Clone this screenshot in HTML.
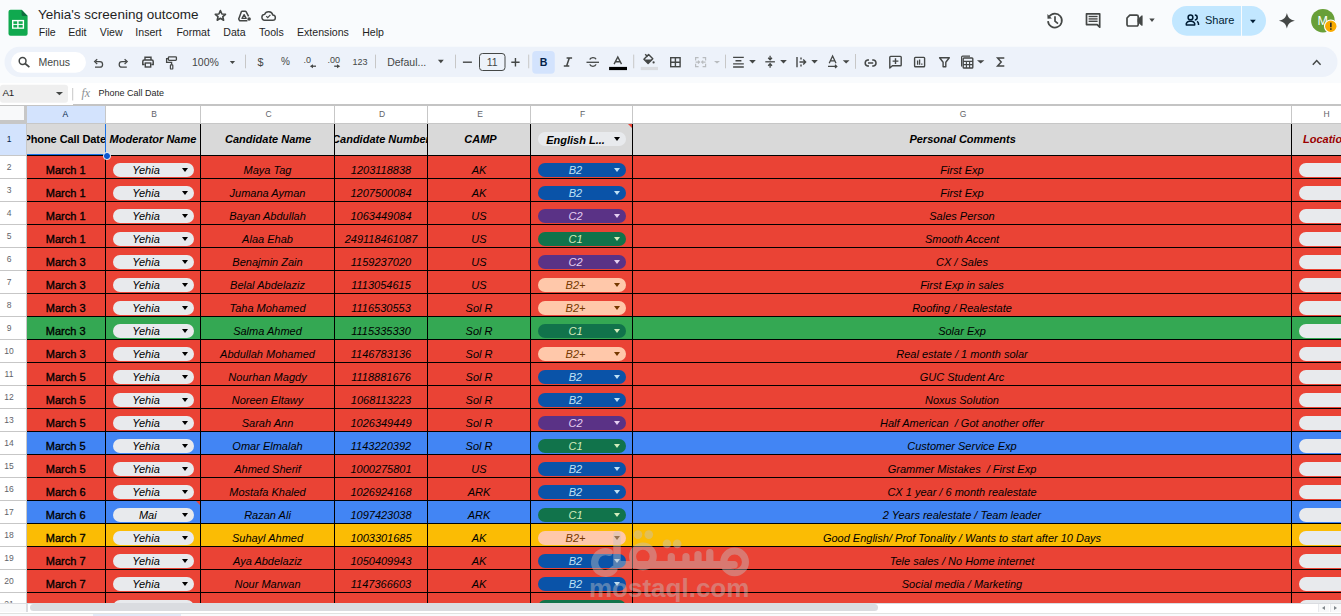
<!DOCTYPE html><html><head><meta charset="utf-8"><style>
*{box-sizing:border-box;margin:0;padding:0}
html,body{width:1341px;height:616px;overflow:hidden;background:#f9fbfd;font-family:"Liberation Sans",sans-serif;position:relative}
.abs{position:absolute}
.t{position:absolute;white-space:nowrap}
.ch{position:absolute;border-radius:7px;background:#e8eaed;height:13.9px}
.ct{position:absolute;top:0;height:13.9px;line-height:14.7px;font:italic 11px "Liberation Sans",sans-serif;text-align:center;white-space:nowrap}
.arr{position:absolute;width:0;height:0;border-left:3.4px solid transparent;border-right:3.4px solid transparent;border-top:4px solid #000}
.cell{position:absolute;overflow:hidden;white-space:nowrap;font:italic 11px "Liberation Sans",sans-serif;color:#000;text-align:center}
.vl{position:absolute;width:1px;background:#000}
.hl{position:absolute;height:1px;background:#000}
.rn{position:absolute;left:0;width:18px;text-align:center;font:8.5px "Liberation Sans",sans-serif;color:#5f6368}
.cn{position:absolute;top:108.8px;height:17px;line-height:17px;text-align:center;font:8.5px "Liberation Sans",sans-serif;color:#5f6368}
.ico{position:absolute}
.menu{position:absolute;top:25px;font:10.3px "Liberation Sans",sans-serif;color:#1f1f1f;white-space:nowrap}
</style></head><body>
<!-- logo -->
<svg class="abs" style="left:0;top:0" width="1341" height="105" viewBox="0 0 1341 105">
  <path d="M10.5 9.7 H21.6 L27.6 15.9 V33.7 a2 2 0 0 1 -2 2 H10.5 a2 2 0 0 1 -2 -2 V11.7 a2 2 0 0 1 2 -2 Z" fill="#10a94f"/>
  <path d="M21.6 9.7 L27.6 15.9 H23.1 a1.5 1.5 0 0 1 -1.5 -1.5 Z" fill="#0d6e3f"/>
  <rect x="12" y="19.9" width="12.1" height="8.9" fill="#fff"/>
  <rect x="13.4" y="21.3" width="3.8" height="2.6" fill="#10a94f"/>
  <rect x="18.6" y="21.3" width="4.1" height="2.6" fill="#10a94f"/>
  <rect x="13.4" y="24.9" width="3.8" height="2.6" fill="#10a94f"/>
  <rect x="18.6" y="24.9" width="4.1" height="2.6" fill="#10a94f"/>
  <!-- star -->
  <path d="M220.4 10.6 L221.9 14 L225.5 14.3 L222.8 16.7 L223.6 20.2 L220.4 18.3 L217.2 20.2 L218 16.7 L215.3 14.3 L218.9 14 Z" fill="none" stroke="#444746" stroke-width="1.6" stroke-linejoin="round"/>
  <!-- drive move icon -->
  <path d="M242.2 11.2 H245.2 a1 1 0 0 1 0.85 0.5 L248.6 16.4 M247.4 20.8 H240.3 a1 1 0 0 1 -0.86 -0.5 L238.9 19.4 a1 1 0 0 1 0 -1 L241.35 11.7 a1 1 0 0 1 0.85 -0.5" fill="none" stroke="#444746" stroke-width="1.5" stroke-linejoin="round"/>
  <path d="M244.1 14.6 L246.2 18.4 H242 Z" fill="none" stroke="#444746" stroke-width="1.3" stroke-linejoin="round"/>
  <circle cx="249.1" cy="19" r="1.8" fill="#444746"/>
  <!-- cloud -->
  <path d="M265 20.2 a2.9 2.9 0 0 1 -0.4 -5.8 a4.3 4.3 0 0 1 8.2 0.6 a2.6 2.6 0 0 1 -0.1 5.2 Z" fill="none" stroke="#444746" stroke-width="1.45" stroke-linejoin="round"/>
  <path d="M266.2 16.2 L267.7 17.7 L270.4 14.8" fill="none" stroke="#444746" stroke-width="1.2"/>

  <!-- right icons: history -->
  <path d="M1049.2 16.6 A6.95 6.95 0 1 1 1047.98 21.1" fill="none" stroke="#444746" stroke-width="1.7"/>
  <path d="M1047.4 14.1 L1047.5 18.7 L1051.9 18.5 Z" fill="#444746"/>
  <path d="M1055 16.2 V21.2 L1058 23.6" fill="none" stroke="#444746" stroke-width="1.7"/>
  <!-- comments -->
  <path d="M1086.5 13.8 H1099.7 V27.2 L1097.2 24.6 H1086.5 Z" fill="none" stroke="#444746" stroke-width="1.7" stroke-linejoin="round"/>
  <rect x="1088.6" y="15.8" width="9" height="1.4" fill="#444746"/>
  <rect x="1088.6" y="18" width="9" height="1.8" fill="#707070"/>
  <rect x="1088.6" y="20.6" width="9" height="1.4" fill="#444746"/>
  <!-- meet -->
  <path d="M1129.8 15.2 H1136.8 a1.4 1.4 0 0 1 1.4 1.4 V24.6 a1.4 1.4 0 0 1 -1.4 1.4 H1128.4 a1.4 1.4 0 0 1 -1.4 -1.4 V18 Z" fill="none" stroke="#444746" stroke-width="1.7" stroke-linejoin="round"/>
  <path d="M1138.2 19.4 L1142 16 V25.2 L1138.2 21.8 Z" fill="#444746" stroke="#444746" stroke-width="1.2" stroke-linejoin="round"/>
  <path d="M1149.3 18.6 H1154.7 L1152 22 Z" fill="#444746"/>
  <!-- share pill -->
  <path d="M1186.9 5.9 H1241 V35.7 H1186.9 a14.9 14.9 0 0 1 0 -29.8 Z" fill="#c2e7ff"/>
  <path d="M1242 5.9 H1251.1 a14.9 14.9 0 0 1 0 29.8 H1242 Z" fill="#c2e7ff"/>
  <circle cx="1190.5" cy="17.4" r="2.4" fill="none" stroke="#001d35" stroke-width="1.5"/>
  <path d="M1186.3 24.9 V23.6 a3.6 3.6 0 0 1 3.6 -2.4 h1.2 a3.6 3.6 0 0 1 3.6 2.4 V24.9 Z" fill="none" stroke="#001d35" stroke-width="1.5" stroke-linejoin="round"/>
  <path d="M1194.8 15.1 a2.4 2.4 0 0 1 0 4.8 M1197 21.4 a3 3 0 0 1 1.5 2.4 V24.9" fill="none" stroke="#001d35" stroke-width="1.5"/>
  <path d="M1250 19.7 H1255.8 L1252.9 23.2 Z" fill="#001d35"/>
  <!-- gemini -->
  <path d="M1286.9 13.1 C1287.9 17.6 1290 19.9 1294.9 20.85 C1290 21.8 1287.9 24.1 1286.9 28.6 C1285.9 24.1 1283.8 21.8 1278.9 20.85 C1283.8 19.9 1285.9 17.6 1286.9 13.1 Z" fill="#444746"/>
  <!-- avatar -->
  <circle cx="1322.9" cy="20.7" r="11.8" fill="#689f38"/>
  <text x="1322.6" y="25.1" font-family="Liberation Sans" font-size="12.5" fill="#fff" text-anchor="middle">M</text>
  <circle cx="1330.8" cy="26.3" r="6.3" fill="#f9ab00" stroke="#fff" stroke-width="1.1"/>
  <rect x="1330.1" y="22.6" width="1.5" height="4.6" fill="#202124"/>
  <rect x="1330.1" y="28.3" width="1.5" height="1.5" fill="#202124"/>

  <!-- toolbar pill -->
  <rect x="4.5" y="46.8" width="1333" height="30.2" rx="15.1" fill="#edf2fa"/>
  <rect x="11" y="52" width="75" height="20.8" rx="10.4" fill="#fff"/>
  <!-- search -->
  <circle cx="22.6" cy="61" r="3.4" fill="none" stroke="#444746" stroke-width="1.5"/>
  <path d="M25.1 63.5 L29.4 67.2" stroke="#444746" stroke-width="1.7"/>
  <!-- undo -->
  <path d="M95.6 61.6 H99.8 a2.8 2.8 0 0 1 0 5.6 H95" fill="none" stroke="#444746" stroke-width="1.25"/>
  <path d="M97.2 59.2 L94.6 61.6 L97.2 64" fill="none" stroke="#444746" stroke-width="1.25"/>
  <!-- redo -->
  <path d="M126.2 61.6 H122 a2.8 2.8 0 0 0 0 5.6 H126.8" fill="none" stroke="#444746" stroke-width="1.25"/>
  <path d="M124.6 59.2 L127.2 61.6 L124.6 64" fill="none" stroke="#444746" stroke-width="1.25"/>
  <!-- print -->
  <path d="M145 60 V57.2 H151 V60" fill="none" stroke="#444746" stroke-width="1.4"/>
  <path d="M144.6 64.6 H142.8 V61.4 a1.4 1.4 0 0 1 1.4 -1.4 H151.8 a1.4 1.4 0 0 1 1.4 1.4 V64.6 H151.4" fill="none" stroke="#444746" stroke-width="1.5"/>
  <rect x="145.3" y="63" width="5.4" height="4" fill="none" stroke="#444746" stroke-width="1.4"/>
  <!-- paint format -->
  <rect x="168.4" y="56.8" width="8" height="3.6" rx="0.8" fill="none" stroke="#444746" stroke-width="1.3"/>
  <path d="M168.4 58.6 H166.6 V62.4 H171.6 V64.8" fill="none" stroke="#444746" stroke-width="1.3"/>
  <rect x="170.4" y="64.8" width="2.4" height="4.2" rx="0.6" fill="none" stroke="#444746" stroke-width="1.2"/>
  <!-- zoom caret -->
  <path d="M229.8 61 H235.1 L232.45 64.1 Z" fill="#444746"/>
  <!-- separators -->
  <rect x="245" y="54.6" width="1" height="13.7" fill="#c7c7c7"/>
  <rect x="375" y="54.6" width="1" height="13.7" fill="#c7c7c7"/>
  <rect x="455" y="54.6" width="1" height="13.7" fill="#c7c7c7"/>
  <rect x="528.2" y="54.6" width="1" height="13.7" fill="#c7c7c7"/>
  <rect x="633.2" y="54.6" width="1" height="13.7" fill="#c7c7c7"/>
  <rect x="725" y="54.6" width="1" height="13.7" fill="#c7c7c7"/>
  <rect x="855" y="54" width="1" height="14.8" fill="#c7c7c7"/>
  <!-- .0 arrows -->
  <path d="M312.5 66.2 H316" stroke="#444746" stroke-width="1.3"/>
  <path d="M309.9 66.2 L313 64.2 V68.2 Z" fill="#444746"/>
  <path d="M334.2 66.2 H337.5" stroke="#444746" stroke-width="1.3"/>
  <path d="M340.2 66.2 L337 64.2 V68.2 Z" fill="#444746"/>
  <!-- font size box -->
  <rect x="479.5" y="53.5" width="25.5" height="17" rx="3" fill="none" stroke="#444746" stroke-width="1"/>
  <path d="M462.9 62.2 H471.9" stroke="#444746" stroke-width="1.4"/>
  <path d="M511.3 62.3 H519.6 M515.45 58.1 V66.5" stroke="#444746" stroke-width="1.4"/>
  <!-- font caret -->
  <path d="M437.9 59.7 H443.8 L440.85 63.3 Z" fill="#444746"/>
  <!-- bold bg -->
  <rect x="532.2" y="51" width="22.6" height="22.7" rx="4" fill="#d3e3fd"/>
  <path d="M566.6 57.9 H572.1 M563.8 65.9 H569.3 M569.3 57.9 L566.6 65.9" fill="none" stroke="#444746" stroke-width="1.5"/>
  <!-- strikethrough -->
  <path d="M586.5 62.3 H599" stroke="#444746" stroke-width="1.3"/>
  <path d="M596 59.3 a3.2 2.4 0 0 0 -6.2 0.2 M589.8 64.4 a3.2 2.6 0 0 0 6.2 0" fill="none" stroke="#444746" stroke-width="1.4"/>
  <!-- text color A -->
  <path d="M614.1 64.1 L617.8 57 L621.5 64.1 M615.5 61.8 H620.1" fill="none" stroke="#444746" stroke-width="1.4"/>
  <rect x="609.1" y="66.9" width="17.9" height="3.2" fill="#000"/>
  <!-- fill bucket -->
  <path d="M645.2 54.2 L647.7 56.7 M643.9 59.3 L648.6 54.6 L652.8 58.8 L648.1 63.5 Z" fill="none" stroke="#444746" stroke-width="1.4" stroke-linejoin="round"/>
  <path d="M644.6 59.4 H652 L648.1 63.2 Z" fill="#444746"/>
  <circle cx="653.6" cy="62.4" r="1.1" fill="#444746"/>
  <rect x="640.8" y="66.9" width="17.2" height="3.2" fill="#dadce0"/>
  <!-- borders -->
  <rect x="670.7" y="57.7" width="9.4" height="9" fill="none" stroke="#444746" stroke-width="1.4"/>
  <path d="M675.4 57.7 V66.7 M670.7 62.2 H680.1" stroke="#444746" stroke-width="1.4"/>
  <!-- merge disabled -->
  <path d="M698.6 57.6 H695.6 V60.4 M695.6 63.8 V66.6 H698.6 M702.6 57.6 H705.6 V60.4 M705.6 63.8 V66.6 H702.6" fill="none" stroke="#b9bcbf" stroke-width="1.2"/>
  <path d="M695.6 62.1 H699.4 M698 60.6 L699.6 62.1 L698 63.6 M705.6 62.1 H701.8 M703.2 60.6 L701.6 62.1 L703.2 63.6" fill="none" stroke="#b9bcbf" stroke-width="1.1"/>
  <path d="M714 61 H720 L717 63.6 Z" fill="#b9bcbf"/>
  <!-- align center -->
  <path d="M733.1 57.4 H743.8 M735.5 60.7 H741.4 M733.1 63.9 H743.8 M733.1 67 H743.8" stroke="#444746" stroke-width="1.4"/>
  <path d="M749.2 59.9 H755.8 L752.5 63.5 Z" fill="#444746"/>
  <!-- vertical align -->
  <path d="M765.3 61.8 H774.9" stroke="#444746" stroke-width="1.3"/>
  <path d="M770.1 55.8 V59.6 M768.2 57.8 L770.1 59.8 L772 57.8 M770.1 67.7 V64 M768.2 65.8 L770.1 63.8 L772 65.8" fill="none" stroke="#444746" stroke-width="1.3"/>
  <path d="M780.2 59.9 H786.8 L783.5 63.5 Z" fill="#444746"/>
  <!-- wrap -->
  <path d="M797 57 V67.2 M799.5 62 H805.5 M803.2 59.6 L805.6 62 L803.2 64.4 M801 57.6 V59.4 M801 64.6 V66.4" fill="none" stroke="#444746" stroke-width="1.4"/>
  <path d="M811.3 59.9 H817.8 L814.55 63.5 Z" fill="#444746"/>
  <!-- rotate -->
  <path d="M829.2 63.3 L832.6 56 L836 63.3 M830.4 60.9 H834.8" fill="none" stroke="#444746" stroke-width="1.3"/>
  <path d="M828 66.4 H836.8 M835 64.8 L836.8 66.4 L835 68" fill="none" stroke="#444746" stroke-width="1.2"/>
  <path d="M842.8 60.2 H849.5 L846.15 63.6 Z" fill="#444746"/>
  <!-- link -->
  <path d="M869 59.9 H867.6 a3.2 3.2 0 0 0 0 6.2 H869 M872.2 59.9 H873.6 a3.2 3.2 0 0 1 0 6.2 H872.2 M868 63 H873.2" fill="none" stroke="#444746" stroke-width="1.5"/>
  <!-- comment add -->
  <path d="M889.8 68.1 V57.2 a0.8 0.8 0 0 1 0.8 -0.8 H900.4 a0.8 0.8 0 0 1 0.8 0.8 V65 a0.8 0.8 0 0 1 -0.8 0.8 H892.4 Z" fill="none" stroke="#444746" stroke-width="1.4" stroke-linejoin="round"/>
  <path d="M895.5 58.2 V64 M892.6 61.1 H898.4" stroke="#444746" stroke-width="1.4"/>
  <!-- chart -->
  <rect x="914.6" y="57.4" width="10" height="9.4" rx="0.8" fill="none" stroke="#444746" stroke-width="1.4"/>
  <path d="M917.6 60.5 V64.8 M919.6 59.5 V64.8 M921.8 63.4 V64.8" stroke="#444746" stroke-width="1.3"/>
  <!-- filter -->
  <path d="M939.6 57.8 H949.3 L945.8 62.3 V66.8 H943.1 V62.3 Z" fill="none" stroke="#444746" stroke-width="1.4" stroke-linejoin="round"/>
  <!-- functions table -->
  <rect x="963.2" y="58" width="9.6" height="10" rx="0.8" fill="none" stroke="#444746" stroke-width="1.4"/>
  <path d="M961.6 66.6 V57.2 a1 1 0 0 1 1 -1 H970" fill="none" stroke="#444746" stroke-width="1.2"/>
  <path d="M963.2 61.4 H972.8 M963.2 64.6 H972.8 M966.4 61.4 V68 M969.6 61.4 V68" stroke="#444746" stroke-width="1.1"/>
  <path d="M977 60.2 H984.4 L980.7 63.6 Z" fill="#444746"/>
  <!-- sigma -->
  <path d="M1004.3 58 H997.6 L1001.2 62 L997.6 66 H1004.3" fill="none" stroke="#444746" stroke-width="1.5" stroke-linejoin="miter"/>
  <!-- collapse caret -->
  <path d="M1312.8 64.8 L1316.7 60.6 L1320.6 64.8" fill="none" stroke="#444746" stroke-width="1.5"/>

  <!-- formula bar -->
  <rect x="0" y="77" width="1341" height="28" fill="#f9fbfd"/>
  <rect x="0" y="83" width="1341" height="22" fill="#fff"/>
  <rect x="0" y="84.7" width="68" height="18" rx="3" fill="#efefef"/>
  <path d="M55.9 92 H63 L59.45 95.3 Z" fill="#444746"/>
  <rect x="72.2" y="88" width="1" height="12.5" fill="#c7c7c7"/>
</svg>
<div class="t" style="left:38px;top:8px;font-size:13.5px;line-height:13.5px;color:#1f1f1f">Yehia's screening outcome</div>
<div class="t" style="left:38.7px;top:26.8px;font-size:10.6px;line-height:10.6px;color:#1f1f1f">File</div>
<div class="t" style="left:68.2px;top:26.8px;font-size:10.6px;line-height:10.6px;color:#1f1f1f">Edit</div>
<div class="t" style="left:99.8px;top:26.8px;font-size:10.6px;line-height:10.6px;color:#1f1f1f">View</div>
<div class="t" style="left:135.3px;top:26.8px;font-size:10.6px;line-height:10.6px;color:#1f1f1f">Insert</div>
<div class="t" style="left:176.4px;top:26.8px;font-size:10.6px;line-height:10.6px;color:#1f1f1f">Format</div>
<div class="t" style="left:223.3px;top:26.8px;font-size:10.6px;line-height:10.6px;color:#1f1f1f">Data</div>
<div class="t" style="left:259px;top:26.8px;font-size:10.6px;line-height:10.6px;color:#1f1f1f">Tools</div>
<div class="t" style="left:297px;top:26.8px;font-size:10.6px;line-height:10.6px;color:#1f1f1f">Extensions</div>
<div class="t" style="left:362.2px;top:26.8px;font-size:10.6px;line-height:10.6px;color:#1f1f1f">Help</div>
<div class="t" style="left:1205px;top:15px;font-size:11px;line-height:11px;color:#001d35">Share</div>
<div class="t" style="left:38.5px;top:57px;font-size:10.5px;line-height:10.5px;color:#444746">Menus</div>
<div class="t" style="left:192px;top:57.3px;font-size:10.5px;line-height:10.5px;color:#444746">100%</div>
<div class="t" style="left:257.4px;top:56.8px;font-size:10.8px;line-height:10.8px;color:#444746">$</div>
<div class="t" style="left:281px;top:57.3px;font-size:10px;line-height:10px;color:#444746">%</div>
<div class="t" style="left:303.4px;top:56.2px;font-size:9px;line-height:9px;color:#444746">.0</div>
<div class="t" style="left:327.4px;top:56.2px;font-size:9px;line-height:9px;color:#444746">.00</div>
<div class="t" style="left:352.5px;top:57.6px;font-size:9px;line-height:9px;color:#444746">123</div>
<div class="t" style="left:387.2px;top:57.3px;font-size:10.5px;line-height:10.5px;color:#444746">Defaul...</div>
<div class="t" style="left:479.5px;top:56.8px;width:25.5px;text-align:center;font-size:10.5px;line-height:10.5px;color:#444746">11</div>
<div class="t" style="left:539.8px;top:57px;font-size:10.6px;line-height:10.6px;font-weight:bold;color:#041e49">B</div>

<div class="t" style="left:2.4px;top:88.2px;font-size:9.8px;line-height:9.8px;letter-spacing:-0.25px;color:#1f1f1f">A1</div>
<div class="t" style="left:81.5px;top:87.2px;font-size:12px;line-height:12px;font-style:italic;color:#8a8f94;font-family:'Liberation Serif',serif">fx</div>
<div class="t" style="left:98.5px;top:89px;font-size:9px;line-height:9px;color:#1f1f1f">Phone Call Date</div>

<div class="abs" style="left:0;top:105px;width:1341px;height:498px;background:#fff"></div>
<div class="abs" style="left:0;top:105px;width:1341px;height:1px;background:#c4c4c4"></div>
<div class="abs" style="left:73px;top:104px;width:1268px;height:1px;background:#c4c4c4"></div>
<div class="abs" style="left:0;top:123px;width:1341px;height:1px;background:#c7c7c7"></div>
<div class="abs" style="left:0;top:106px;width:24px;height:14px;background:#f8f9fa"></div>
<div class="abs" style="left:24px;top:106px;width:3px;height:17px;background:#c7c7c7"></div>
<div class="abs" style="left:0;top:120px;width:27px;height:3px;background:#c7c7c7"></div>
<div class="abs" style="left:27px;top:106px;width:78px;height:17px;background:#d3e3fd"></div>
<div class="cn" style="left:26.3px;width:78px;color:#041e49">A</div>
<div class="cn" style="left:107px;width:94px;color:#5f6368">B</div>
<div class="abs" style="left:105px;top:106px;width:1px;height:17px;background:#c7c7c7"></div>
<div class="cn" style="left:202px;width:133px;color:#5f6368">C</div>
<div class="abs" style="left:200px;top:106px;width:1px;height:17px;background:#c7c7c7"></div>
<div class="cn" style="left:336px;width:92px;color:#5f6368">D</div>
<div class="abs" style="left:334px;top:106px;width:1px;height:17px;background:#c7c7c7"></div>
<div class="cn" style="left:429px;width:102px;color:#5f6368">E</div>
<div class="abs" style="left:427px;top:106px;width:1px;height:17px;background:#c7c7c7"></div>
<div class="cn" style="left:532px;width:101px;color:#5f6368">F</div>
<div class="abs" style="left:530px;top:106px;width:1px;height:17px;background:#c7c7c7"></div>
<div class="cn" style="left:634px;width:658px;color:#5f6368">G</div>
<div class="abs" style="left:632px;top:106px;width:1px;height:17px;background:#c7c7c7"></div>
<div class="cn" style="left:1291.7px;width:70px;color:#5f6368">H</div>
<div class="abs" style="left:1291px;top:106px;width:1px;height:17px;background:#c7c7c7"></div>
<div class="abs" style="left:26px;top:124px;width:1px;height:479px;background:#c7c7c7"></div>
<div class="abs" style="left:0;top:124px;width:26px;height:31px;background:#d3e3fd"></div>
<div class="rn" style="top:124px;height:31px;line-height:31px;color:#041e49">1</div>
<div class="rn" style="top:156px;height:22px;line-height:22px">2</div>
<div class="abs" style="left:0;top:155px;width:26px;height:1px;background:#c7c7c7"></div>
<div class="rn" style="top:179px;height:22px;line-height:22px">3</div>
<div class="abs" style="left:0;top:178px;width:26px;height:1px;background:#c7c7c7"></div>
<div class="rn" style="top:202px;height:22px;line-height:22px">4</div>
<div class="abs" style="left:0;top:201px;width:26px;height:1px;background:#c7c7c7"></div>
<div class="rn" style="top:225px;height:22px;line-height:22px">5</div>
<div class="abs" style="left:0;top:224px;width:26px;height:1px;background:#c7c7c7"></div>
<div class="rn" style="top:248px;height:22px;line-height:22px">6</div>
<div class="abs" style="left:0;top:247px;width:26px;height:1px;background:#c7c7c7"></div>
<div class="rn" style="top:271px;height:22px;line-height:22px">7</div>
<div class="abs" style="left:0;top:270px;width:26px;height:1px;background:#c7c7c7"></div>
<div class="rn" style="top:294px;height:22px;line-height:22px">8</div>
<div class="abs" style="left:0;top:293px;width:26px;height:1px;background:#c7c7c7"></div>
<div class="rn" style="top:317px;height:22px;line-height:22px">9</div>
<div class="abs" style="left:0;top:316px;width:26px;height:1px;background:#c7c7c7"></div>
<div class="rn" style="top:340px;height:22px;line-height:22px">10</div>
<div class="abs" style="left:0;top:339px;width:26px;height:1px;background:#c7c7c7"></div>
<div class="rn" style="top:363px;height:22px;line-height:22px">11</div>
<div class="abs" style="left:0;top:362px;width:26px;height:1px;background:#c7c7c7"></div>
<div class="rn" style="top:386px;height:22px;line-height:22px">12</div>
<div class="abs" style="left:0;top:385px;width:26px;height:1px;background:#c7c7c7"></div>
<div class="rn" style="top:409px;height:22px;line-height:22px">13</div>
<div class="abs" style="left:0;top:408px;width:26px;height:1px;background:#c7c7c7"></div>
<div class="rn" style="top:432px;height:22px;line-height:22px">14</div>
<div class="abs" style="left:0;top:431px;width:26px;height:1px;background:#c7c7c7"></div>
<div class="rn" style="top:455px;height:22px;line-height:22px">15</div>
<div class="abs" style="left:0;top:454px;width:26px;height:1px;background:#c7c7c7"></div>
<div class="rn" style="top:478px;height:22px;line-height:22px">16</div>
<div class="abs" style="left:0;top:477px;width:26px;height:1px;background:#c7c7c7"></div>
<div class="rn" style="top:501px;height:22px;line-height:22px">17</div>
<div class="abs" style="left:0;top:500px;width:26px;height:1px;background:#c7c7c7"></div>
<div class="rn" style="top:524px;height:22px;line-height:22px">18</div>
<div class="abs" style="left:0;top:523px;width:26px;height:1px;background:#c7c7c7"></div>
<div class="rn" style="top:547px;height:22px;line-height:22px">19</div>
<div class="abs" style="left:0;top:546px;width:26px;height:1px;background:#c7c7c7"></div>
<div class="rn" style="top:570px;height:22px;line-height:22px">20</div>
<div class="abs" style="left:0;top:569px;width:26px;height:1px;background:#c7c7c7"></div>
<div class="rn" style="top:593px;height:22px;line-height:22px">21</div>
<div class="abs" style="left:0;top:592px;width:26px;height:1px;background:#c7c7c7"></div>
<div class="rn" style="top:616px;height:22px;line-height:22px">22</div>
<div class="abs" style="left:0;top:615px;width:26px;height:1px;background:#c7c7c7"></div>
<div class="abs" style="left:27px;top:124px;width:1314px;height:31px;background:#d9d9d9"></div>
<div class="cell" style="left:27px;top:124px;width:78px;height:31px;line-height:31px;font-style:normal;font-weight:bold;color:#000;display:flex;justify-content:center"><span style="margin-left:-2.6px;letter-spacing:-0.08px">Phone Call Date</span></div>
<div class="cell" style="left:106px;top:124px;width:94px;height:31px;line-height:31px;font-style:italic;font-weight:bold;color:#000;display:flex;justify-content:center"><span style="">Moderator Name</span></div>
<div class="cell" style="left:201px;top:124px;width:133px;height:31px;line-height:31px;font-style:italic;font-weight:bold;color:#000;display:flex;justify-content:center"><span style="margin-left:1.2px">Candidate Name</span></div>
<div class="cell" style="left:335px;top:124px;width:92px;height:31px;line-height:31px;font-style:italic;font-weight:bold;color:#000;display:flex;justify-content:center"><span style="">Candidate Number</span></div>
<div class="cell" style="left:428px;top:124px;width:102px;height:31px;line-height:31px;font-style:italic;font-weight:bold;color:#000;display:flex;justify-content:center"><span style="margin-left:3px">CAMP</span></div>
<div class="cell" style="left:633px;top:124px;width:658px;height:31px;line-height:31px;font-style:italic;font-weight:bold;color:#000;display:flex;justify-content:center"><span style="margin-left:1.2px">Personal Comments</span></div>
<div class="cell" style="left:1292px;top:124px;width:49px;height:31px;line-height:31px;font-style:italic;font-weight:bold;color:#990000;text-align:left;padding-left:11px">Location</div>
<div class="ch" style="left:538px;top:132px;width:88px;background:#e8eaed"><div class="ct" style="left:0px;top:1.5px;width:75px;color:#000;font-weight:bold">English L...</div><div class="arr" style="left:75.9px;top:5.4px;border-top-color:#000"></div></div>
<div class="abs" style="left:628px;top:124px;width:0;height:0;border-left:4px solid transparent;border-top:4px solid #ea4335"></div>
<div class="abs" style="left:27px;top:156px;width:1314px;height:22px;background:#ea4335"></div>
<div class="cell" style="left:27px;top:156px;width:78px;height:22px;line-height:22px;padding-top:3px;font-weight:normal;font-style:normal;-webkit-text-stroke:0.35px #000;text-indent:-0.6px">March 1</div>
<div class="cell" style="left:201px;top:156px;width:133px;height:22px;line-height:22px;padding-top:3px;">Maya Tag</div>
<div class="cell" style="left:335px;top:156px;width:92px;height:22px;line-height:22px;padding-top:3px;">1203118838</div>
<div class="cell" style="left:428px;top:156px;width:102px;height:22px;line-height:22px;padding-top:3px;">AK</div>
<div class="cell" style="left:633px;top:156px;width:658px;height:22px;line-height:22px;padding-top:3px;">First Exp</div>
<div class="ch" style="left:113px;top:163.1px;width:81px;background:#e8eaed"><div class="ct" style="left:0px;top:0.9px;width:66px;color:#000;">Yehia</div><div class="arr" style="left:68.9px;top:5.4px;border-top-color:#000"></div></div>
<div class="ch" style="left:538px;top:163.1px;width:88px;background:#0a53a8"><div class="ct" style="left:0px;top:0.9px;width:75px;color:#bfe1f6;">B2</div><div class="arr" style="left:75.9px;top:5.4px;border-top-color:#bfe1f6"></div></div>
<div class="ch" style="left:1299px;top:163.1px;width:60px"></div>
<div class="abs" style="left:27px;top:179px;width:1314px;height:22px;background:#ea4335"></div>
<div class="cell" style="left:27px;top:179px;width:78px;height:22px;line-height:22px;padding-top:3px;font-weight:normal;font-style:normal;-webkit-text-stroke:0.35px #000;text-indent:-0.6px">March 1</div>
<div class="cell" style="left:201px;top:179px;width:133px;height:22px;line-height:22px;padding-top:3px;">Jumana Ayman</div>
<div class="cell" style="left:335px;top:179px;width:92px;height:22px;line-height:22px;padding-top:3px;">1207500084</div>
<div class="cell" style="left:428px;top:179px;width:102px;height:22px;line-height:22px;padding-top:3px;">AK</div>
<div class="cell" style="left:633px;top:179px;width:658px;height:22px;line-height:22px;padding-top:3px;">First Exp</div>
<div class="ch" style="left:113px;top:186.1px;width:81px;background:#e8eaed"><div class="ct" style="left:0px;top:0.9px;width:66px;color:#000;">Yehia</div><div class="arr" style="left:68.9px;top:5.4px;border-top-color:#000"></div></div>
<div class="ch" style="left:538px;top:186.1px;width:88px;background:#0a53a8"><div class="ct" style="left:0px;top:0.9px;width:75px;color:#bfe1f6;">B2</div><div class="arr" style="left:75.9px;top:5.4px;border-top-color:#bfe1f6"></div></div>
<div class="ch" style="left:1299px;top:186.1px;width:60px"></div>
<div class="abs" style="left:27px;top:202px;width:1314px;height:22px;background:#ea4335"></div>
<div class="cell" style="left:27px;top:202px;width:78px;height:22px;line-height:22px;padding-top:3px;font-weight:normal;font-style:normal;-webkit-text-stroke:0.35px #000;text-indent:-0.6px">March 1</div>
<div class="cell" style="left:201px;top:202px;width:133px;height:22px;line-height:22px;padding-top:3px;">Bayan Abdullah</div>
<div class="cell" style="left:335px;top:202px;width:92px;height:22px;line-height:22px;padding-top:3px;">1063449084</div>
<div class="cell" style="left:428px;top:202px;width:102px;height:22px;line-height:22px;padding-top:3px;">US</div>
<div class="cell" style="left:633px;top:202px;width:658px;height:22px;line-height:22px;padding-top:3px;">Sales Person</div>
<div class="ch" style="left:113px;top:209.1px;width:81px;background:#e8eaed"><div class="ct" style="left:0px;top:0.9px;width:66px;color:#000;">Yehia</div><div class="arr" style="left:68.9px;top:5.4px;border-top-color:#000"></div></div>
<div class="ch" style="left:538px;top:209.1px;width:88px;background:#5a3286"><div class="ct" style="left:0px;top:0.9px;width:75px;color:#e6cff2;">C2</div><div class="arr" style="left:75.9px;top:5.4px;border-top-color:#e6cff2"></div></div>
<div class="ch" style="left:1299px;top:209.1px;width:60px"></div>
<div class="abs" style="left:27px;top:225px;width:1314px;height:22px;background:#ea4335"></div>
<div class="cell" style="left:27px;top:225px;width:78px;height:22px;line-height:22px;padding-top:3px;font-weight:normal;font-style:normal;-webkit-text-stroke:0.35px #000;text-indent:-0.6px">March 1</div>
<div class="cell" style="left:201px;top:225px;width:133px;height:22px;line-height:22px;padding-top:3px;">Alaa Ehab</div>
<div class="cell" style="left:335px;top:225px;width:92px;height:22px;line-height:22px;padding-top:3px;">249118461087</div>
<div class="cell" style="left:428px;top:225px;width:102px;height:22px;line-height:22px;padding-top:3px;">US</div>
<div class="cell" style="left:633px;top:225px;width:658px;height:22px;line-height:22px;padding-top:3px;">Smooth Accent</div>
<div class="ch" style="left:113px;top:232.1px;width:81px;background:#e8eaed"><div class="ct" style="left:0px;top:0.9px;width:66px;color:#000;">Yehia</div><div class="arr" style="left:68.9px;top:5.4px;border-top-color:#000"></div></div>
<div class="ch" style="left:538px;top:232.1px;width:88px;background:#11734b"><div class="ct" style="left:0px;top:0.9px;width:75px;color:#d4edbc;">C1</div><div class="arr" style="left:75.9px;top:5.4px;border-top-color:#d4edbc"></div></div>
<div class="ch" style="left:1299px;top:232.1px;width:60px"></div>
<div class="abs" style="left:27px;top:248px;width:1314px;height:22px;background:#ea4335"></div>
<div class="cell" style="left:27px;top:248px;width:78px;height:22px;line-height:22px;padding-top:3px;font-weight:normal;font-style:normal;-webkit-text-stroke:0.35px #000;text-indent:-0.6px">March 3</div>
<div class="cell" style="left:201px;top:248px;width:133px;height:22px;line-height:22px;padding-top:3px;">Benajmin Zain</div>
<div class="cell" style="left:335px;top:248px;width:92px;height:22px;line-height:22px;padding-top:3px;">1159237020</div>
<div class="cell" style="left:428px;top:248px;width:102px;height:22px;line-height:22px;padding-top:3px;">US</div>
<div class="cell" style="left:633px;top:248px;width:658px;height:22px;line-height:22px;padding-top:3px;">CX / Sales</div>
<div class="ch" style="left:113px;top:255.1px;width:81px;background:#e8eaed"><div class="ct" style="left:0px;top:0.9px;width:66px;color:#000;">Yehia</div><div class="arr" style="left:68.9px;top:5.4px;border-top-color:#000"></div></div>
<div class="ch" style="left:538px;top:255.1px;width:88px;background:#5a3286"><div class="ct" style="left:0px;top:0.9px;width:75px;color:#e6cff2;">C2</div><div class="arr" style="left:75.9px;top:5.4px;border-top-color:#e6cff2"></div></div>
<div class="ch" style="left:1299px;top:255.1px;width:60px"></div>
<div class="abs" style="left:27px;top:271px;width:1314px;height:22px;background:#ea4335"></div>
<div class="cell" style="left:27px;top:271px;width:78px;height:22px;line-height:22px;padding-top:3px;font-weight:normal;font-style:normal;-webkit-text-stroke:0.35px #000;text-indent:-0.6px">March 3</div>
<div class="cell" style="left:201px;top:271px;width:133px;height:22px;line-height:22px;padding-top:3px;">Belal Abdelaziz</div>
<div class="cell" style="left:335px;top:271px;width:92px;height:22px;line-height:22px;padding-top:3px;">1113054615</div>
<div class="cell" style="left:428px;top:271px;width:102px;height:22px;line-height:22px;padding-top:3px;">US</div>
<div class="cell" style="left:633px;top:271px;width:658px;height:22px;line-height:22px;padding-top:3px;">First Exp in sales</div>
<div class="ch" style="left:113px;top:278.1px;width:81px;background:#e8eaed"><div class="ct" style="left:0px;top:0.9px;width:66px;color:#000;">Yehia</div><div class="arr" style="left:68.9px;top:5.4px;border-top-color:#000"></div></div>
<div class="ch" style="left:538px;top:278.1px;width:88px;background:#ffc8aa"><div class="ct" style="left:0px;top:0.9px;width:75px;color:#753800;">B2+</div><div class="arr" style="left:75.9px;top:5.4px;border-top-color:#753800"></div></div>
<div class="ch" style="left:1299px;top:278.1px;width:60px"></div>
<div class="abs" style="left:27px;top:294px;width:1314px;height:22px;background:#ea4335"></div>
<div class="cell" style="left:27px;top:294px;width:78px;height:22px;line-height:22px;padding-top:3px;font-weight:normal;font-style:normal;-webkit-text-stroke:0.35px #000;text-indent:-0.6px">March 3</div>
<div class="cell" style="left:201px;top:294px;width:133px;height:22px;line-height:22px;padding-top:3px;">Taha Mohamed</div>
<div class="cell" style="left:335px;top:294px;width:92px;height:22px;line-height:22px;padding-top:3px;">1116530553</div>
<div class="cell" style="left:428px;top:294px;width:102px;height:22px;line-height:22px;padding-top:3px;">Sol R</div>
<div class="cell" style="left:633px;top:294px;width:658px;height:22px;line-height:22px;padding-top:3px;">Roofing / Realestate</div>
<div class="ch" style="left:113px;top:301.1px;width:81px;background:#e8eaed"><div class="ct" style="left:0px;top:0.9px;width:66px;color:#000;">Yehia</div><div class="arr" style="left:68.9px;top:5.4px;border-top-color:#000"></div></div>
<div class="ch" style="left:538px;top:301.1px;width:88px;background:#ffc8aa"><div class="ct" style="left:0px;top:0.9px;width:75px;color:#753800;">B2+</div><div class="arr" style="left:75.9px;top:5.4px;border-top-color:#753800"></div></div>
<div class="ch" style="left:1299px;top:301.1px;width:60px"></div>
<div class="abs" style="left:27px;top:317px;width:1314px;height:22px;background:#34a853"></div>
<div class="cell" style="left:27px;top:317px;width:78px;height:22px;line-height:22px;padding-top:3px;font-weight:normal;font-style:normal;-webkit-text-stroke:0.35px #000;text-indent:-0.6px">March 3</div>
<div class="cell" style="left:201px;top:317px;width:133px;height:22px;line-height:22px;padding-top:3px;">Salma Ahmed</div>
<div class="cell" style="left:335px;top:317px;width:92px;height:22px;line-height:22px;padding-top:3px;">1115335330</div>
<div class="cell" style="left:428px;top:317px;width:102px;height:22px;line-height:22px;padding-top:3px;">Sol R</div>
<div class="cell" style="left:633px;top:317px;width:658px;height:22px;line-height:22px;padding-top:3px;">Solar Exp</div>
<div class="ch" style="left:113px;top:324.1px;width:81px;background:#e8eaed"><div class="ct" style="left:0px;top:0.9px;width:66px;color:#000;">Yehia</div><div class="arr" style="left:68.9px;top:5.4px;border-top-color:#000"></div></div>
<div class="ch" style="left:538px;top:324.1px;width:88px;background:#11734b"><div class="ct" style="left:0px;top:0.9px;width:75px;color:#d4edbc;">C1</div><div class="arr" style="left:75.9px;top:5.4px;border-top-color:#d4edbc"></div></div>
<div class="ch" style="left:1299px;top:324.1px;width:60px"></div>
<div class="abs" style="left:27px;top:340px;width:1314px;height:22px;background:#ea4335"></div>
<div class="cell" style="left:27px;top:340px;width:78px;height:22px;line-height:22px;padding-top:3px;font-weight:normal;font-style:normal;-webkit-text-stroke:0.35px #000;text-indent:-0.6px">March 3</div>
<div class="cell" style="left:201px;top:340px;width:133px;height:22px;line-height:22px;padding-top:3px;">Abdullah Mohamed</div>
<div class="cell" style="left:335px;top:340px;width:92px;height:22px;line-height:22px;padding-top:3px;">1146783136</div>
<div class="cell" style="left:428px;top:340px;width:102px;height:22px;line-height:22px;padding-top:3px;">Sol R</div>
<div class="cell" style="left:633px;top:340px;width:658px;height:22px;line-height:22px;padding-top:3px;">Real estate / 1 month solar</div>
<div class="ch" style="left:113px;top:347.1px;width:81px;background:#e8eaed"><div class="ct" style="left:0px;top:0.9px;width:66px;color:#000;">Yehia</div><div class="arr" style="left:68.9px;top:5.4px;border-top-color:#000"></div></div>
<div class="ch" style="left:538px;top:347.1px;width:88px;background:#ffc8aa"><div class="ct" style="left:0px;top:0.9px;width:75px;color:#753800;">B2+</div><div class="arr" style="left:75.9px;top:5.4px;border-top-color:#753800"></div></div>
<div class="ch" style="left:1299px;top:347.1px;width:60px"></div>
<div class="abs" style="left:27px;top:363px;width:1314px;height:22px;background:#ea4335"></div>
<div class="cell" style="left:27px;top:363px;width:78px;height:22px;line-height:22px;padding-top:3px;font-weight:normal;font-style:normal;-webkit-text-stroke:0.35px #000;text-indent:-0.6px">March 5</div>
<div class="cell" style="left:201px;top:363px;width:133px;height:22px;line-height:22px;padding-top:3px;">Nourhan Magdy</div>
<div class="cell" style="left:335px;top:363px;width:92px;height:22px;line-height:22px;padding-top:3px;">1118881676</div>
<div class="cell" style="left:428px;top:363px;width:102px;height:22px;line-height:22px;padding-top:3px;">Sol R</div>
<div class="cell" style="left:633px;top:363px;width:658px;height:22px;line-height:22px;padding-top:3px;">GUC Student Arc</div>
<div class="ch" style="left:113px;top:370.1px;width:81px;background:#e8eaed"><div class="ct" style="left:0px;top:0.9px;width:66px;color:#000;">Yehia</div><div class="arr" style="left:68.9px;top:5.4px;border-top-color:#000"></div></div>
<div class="ch" style="left:538px;top:370.1px;width:88px;background:#0a53a8"><div class="ct" style="left:0px;top:0.9px;width:75px;color:#bfe1f6;">B2</div><div class="arr" style="left:75.9px;top:5.4px;border-top-color:#bfe1f6"></div></div>
<div class="ch" style="left:1299px;top:370.1px;width:60px"></div>
<div class="abs" style="left:27px;top:386px;width:1314px;height:22px;background:#ea4335"></div>
<div class="cell" style="left:27px;top:386px;width:78px;height:22px;line-height:22px;padding-top:3px;font-weight:normal;font-style:normal;-webkit-text-stroke:0.35px #000;text-indent:-0.6px">March 5</div>
<div class="cell" style="left:201px;top:386px;width:133px;height:22px;line-height:22px;padding-top:3px;">Noreen Eltawy</div>
<div class="cell" style="left:335px;top:386px;width:92px;height:22px;line-height:22px;padding-top:3px;">1068113223</div>
<div class="cell" style="left:428px;top:386px;width:102px;height:22px;line-height:22px;padding-top:3px;">Sol R</div>
<div class="cell" style="left:633px;top:386px;width:658px;height:22px;line-height:22px;padding-top:3px;">Noxus Solution</div>
<div class="ch" style="left:113px;top:393.1px;width:81px;background:#e8eaed"><div class="ct" style="left:0px;top:0.9px;width:66px;color:#000;">Yehia</div><div class="arr" style="left:68.9px;top:5.4px;border-top-color:#000"></div></div>
<div class="ch" style="left:538px;top:393.1px;width:88px;background:#0a53a8"><div class="ct" style="left:0px;top:0.9px;width:75px;color:#bfe1f6;">B2</div><div class="arr" style="left:75.9px;top:5.4px;border-top-color:#bfe1f6"></div></div>
<div class="ch" style="left:1299px;top:393.1px;width:60px"></div>
<div class="abs" style="left:27px;top:409px;width:1314px;height:22px;background:#ea4335"></div>
<div class="cell" style="left:27px;top:409px;width:78px;height:22px;line-height:22px;padding-top:3px;font-weight:normal;font-style:normal;-webkit-text-stroke:0.35px #000;text-indent:-0.6px">March 5</div>
<div class="cell" style="left:201px;top:409px;width:133px;height:22px;line-height:22px;padding-top:3px;">Sarah Ann</div>
<div class="cell" style="left:335px;top:409px;width:92px;height:22px;line-height:22px;padding-top:3px;">1026349449</div>
<div class="cell" style="left:428px;top:409px;width:102px;height:22px;line-height:22px;padding-top:3px;">Sol R</div>
<div class="cell" style="left:633px;top:409px;width:658px;height:22px;line-height:22px;padding-top:3px;">Half American &nbsp;/ Got another offer</div>
<div class="ch" style="left:113px;top:416.1px;width:81px;background:#e8eaed"><div class="ct" style="left:0px;top:0.9px;width:66px;color:#000;">Yehia</div><div class="arr" style="left:68.9px;top:5.4px;border-top-color:#000"></div></div>
<div class="ch" style="left:538px;top:416.1px;width:88px;background:#5a3286"><div class="ct" style="left:0px;top:0.9px;width:75px;color:#e6cff2;">C2</div><div class="arr" style="left:75.9px;top:5.4px;border-top-color:#e6cff2"></div></div>
<div class="ch" style="left:1299px;top:416.1px;width:60px"></div>
<div class="abs" style="left:27px;top:432px;width:1314px;height:22px;background:#4285f4"></div>
<div class="cell" style="left:27px;top:432px;width:78px;height:22px;line-height:22px;padding-top:3px;font-weight:normal;font-style:normal;-webkit-text-stroke:0.35px #000;text-indent:-0.6px">March 5</div>
<div class="cell" style="left:201px;top:432px;width:133px;height:22px;line-height:22px;padding-top:3px;">Omar Elmalah</div>
<div class="cell" style="left:335px;top:432px;width:92px;height:22px;line-height:22px;padding-top:3px;">1143220392</div>
<div class="cell" style="left:428px;top:432px;width:102px;height:22px;line-height:22px;padding-top:3px;">Sol R</div>
<div class="cell" style="left:633px;top:432px;width:658px;height:22px;line-height:22px;padding-top:3px;">Customer Service Exp</div>
<div class="ch" style="left:113px;top:439.1px;width:81px;background:#e8eaed"><div class="ct" style="left:0px;top:0.9px;width:66px;color:#000;">Yehia</div><div class="arr" style="left:68.9px;top:5.4px;border-top-color:#000"></div></div>
<div class="ch" style="left:538px;top:439.1px;width:88px;background:#11734b"><div class="ct" style="left:0px;top:0.9px;width:75px;color:#d4edbc;">C1</div><div class="arr" style="left:75.9px;top:5.4px;border-top-color:#d4edbc"></div></div>
<div class="ch" style="left:1299px;top:439.1px;width:60px"></div>
<div class="abs" style="left:27px;top:455px;width:1314px;height:22px;background:#ea4335"></div>
<div class="cell" style="left:27px;top:455px;width:78px;height:22px;line-height:22px;padding-top:3px;font-weight:normal;font-style:normal;-webkit-text-stroke:0.35px #000;text-indent:-0.6px">March 5</div>
<div class="cell" style="left:201px;top:455px;width:133px;height:22px;line-height:22px;padding-top:3px;">Ahmed Sherif</div>
<div class="cell" style="left:335px;top:455px;width:92px;height:22px;line-height:22px;padding-top:3px;">1000275801</div>
<div class="cell" style="left:428px;top:455px;width:102px;height:22px;line-height:22px;padding-top:3px;">US</div>
<div class="cell" style="left:633px;top:455px;width:658px;height:22px;line-height:22px;padding-top:3px;">Grammer Mistakes &nbsp;/ First Exp</div>
<div class="ch" style="left:113px;top:462.1px;width:81px;background:#e8eaed"><div class="ct" style="left:0px;top:0.9px;width:66px;color:#000;">Yehia</div><div class="arr" style="left:68.9px;top:5.4px;border-top-color:#000"></div></div>
<div class="ch" style="left:538px;top:462.1px;width:88px;background:#0a53a8"><div class="ct" style="left:0px;top:0.9px;width:75px;color:#bfe1f6;">B2</div><div class="arr" style="left:75.9px;top:5.4px;border-top-color:#bfe1f6"></div></div>
<div class="ch" style="left:1299px;top:462.1px;width:60px"></div>
<div class="abs" style="left:27px;top:478px;width:1314px;height:22px;background:#ea4335"></div>
<div class="cell" style="left:27px;top:478px;width:78px;height:22px;line-height:22px;padding-top:3px;font-weight:normal;font-style:normal;-webkit-text-stroke:0.35px #000;text-indent:-0.6px">March 6</div>
<div class="cell" style="left:201px;top:478px;width:133px;height:22px;line-height:22px;padding-top:3px;">Mostafa Khaled</div>
<div class="cell" style="left:335px;top:478px;width:92px;height:22px;line-height:22px;padding-top:3px;">1026924168</div>
<div class="cell" style="left:428px;top:478px;width:102px;height:22px;line-height:22px;padding-top:3px;">ARK</div>
<div class="cell" style="left:633px;top:478px;width:658px;height:22px;line-height:22px;padding-top:3px;">CX 1 year / 6 month realestate</div>
<div class="ch" style="left:113px;top:485.1px;width:81px;background:#e8eaed"><div class="ct" style="left:0px;top:0.9px;width:66px;color:#000;">Yehia</div><div class="arr" style="left:68.9px;top:5.4px;border-top-color:#000"></div></div>
<div class="ch" style="left:538px;top:485.1px;width:88px;background:#0a53a8"><div class="ct" style="left:0px;top:0.9px;width:75px;color:#bfe1f6;">B2</div><div class="arr" style="left:75.9px;top:5.4px;border-top-color:#bfe1f6"></div></div>
<div class="ch" style="left:1299px;top:485.1px;width:60px"></div>
<div class="abs" style="left:27px;top:501px;width:1314px;height:22px;background:#4285f4"></div>
<div class="cell" style="left:27px;top:501px;width:78px;height:22px;line-height:22px;padding-top:3px;font-weight:normal;font-style:normal;-webkit-text-stroke:0.35px #000;text-indent:-0.6px">March 6</div>
<div class="cell" style="left:201px;top:501px;width:133px;height:22px;line-height:22px;padding-top:3px;">Razan Ali</div>
<div class="cell" style="left:335px;top:501px;width:92px;height:22px;line-height:22px;padding-top:3px;">1097423038</div>
<div class="cell" style="left:428px;top:501px;width:102px;height:22px;line-height:22px;padding-top:3px;">ARK</div>
<div class="cell" style="left:633px;top:501px;width:658px;height:22px;line-height:22px;padding-top:3px;">2 Years realestate / Team leader</div>
<div class="ch" style="left:113px;top:508.1px;width:81px;background:#e8eaed"><div class="ct" style="left:1.8px;top:0.9px;width:66px;color:#000;">Mai</div><div class="arr" style="left:68.9px;top:5.4px;border-top-color:#000"></div></div>
<div class="ch" style="left:538px;top:508.1px;width:88px;background:#11734b"><div class="ct" style="left:0px;top:0.9px;width:75px;color:#d4edbc;">C1</div><div class="arr" style="left:75.9px;top:5.4px;border-top-color:#d4edbc"></div></div>
<div class="ch" style="left:1299px;top:508.1px;width:60px"></div>
<div class="abs" style="left:27px;top:524px;width:1314px;height:22px;background:#fbbc04"></div>
<div class="cell" style="left:27px;top:524px;width:78px;height:22px;line-height:22px;padding-top:3px;font-weight:normal;font-style:normal;-webkit-text-stroke:0.35px #000;text-indent:-0.6px">March 7</div>
<div class="cell" style="left:201px;top:524px;width:133px;height:22px;line-height:22px;padding-top:3px;">Suhayl Ahmed</div>
<div class="cell" style="left:335px;top:524px;width:92px;height:22px;line-height:22px;padding-top:3px;">1003301685</div>
<div class="cell" style="left:428px;top:524px;width:102px;height:22px;line-height:22px;padding-top:3px;">AK</div>
<div class="cell" style="left:633px;top:524px;width:658px;height:22px;line-height:22px;padding-top:3px;">Good English/ Prof Tonality / Wants to start after 10 Days</div>
<div class="ch" style="left:113px;top:531.1px;width:81px;background:#e8eaed"><div class="ct" style="left:0px;top:0.9px;width:66px;color:#000;">Yehia</div><div class="arr" style="left:68.9px;top:5.4px;border-top-color:#000"></div></div>
<div class="ch" style="left:538px;top:531.1px;width:88px;background:#ffc8aa"><div class="ct" style="left:0px;top:0.9px;width:75px;color:#753800;">B2+</div><div class="arr" style="left:75.9px;top:5.4px;border-top-color:#753800"></div></div>
<div class="ch" style="left:1299px;top:531.1px;width:60px"></div>
<div class="abs" style="left:27px;top:547px;width:1314px;height:22px;background:#ea4335"></div>
<div class="cell" style="left:27px;top:547px;width:78px;height:22px;line-height:22px;padding-top:3px;font-weight:normal;font-style:normal;-webkit-text-stroke:0.35px #000;text-indent:-0.6px">March 7</div>
<div class="cell" style="left:201px;top:547px;width:133px;height:22px;line-height:22px;padding-top:3px;">Aya Abdelaziz</div>
<div class="cell" style="left:335px;top:547px;width:92px;height:22px;line-height:22px;padding-top:3px;">1050409943</div>
<div class="cell" style="left:428px;top:547px;width:102px;height:22px;line-height:22px;padding-top:3px;">AK</div>
<div class="cell" style="left:633px;top:547px;width:658px;height:22px;line-height:22px;padding-top:3px;">Tele sales / No Home internet</div>
<div class="ch" style="left:113px;top:554.1px;width:81px;background:#e8eaed"><div class="ct" style="left:0px;top:0.9px;width:66px;color:#000;">Yehia</div><div class="arr" style="left:68.9px;top:5.4px;border-top-color:#000"></div></div>
<div class="ch" style="left:538px;top:554.1px;width:88px;background:#0a53a8"><div class="ct" style="left:0px;top:0.9px;width:75px;color:#bfe1f6;">B2</div><div class="arr" style="left:75.9px;top:5.4px;border-top-color:#bfe1f6"></div></div>
<div class="ch" style="left:1299px;top:554.1px;width:60px"></div>
<div class="abs" style="left:27px;top:570px;width:1314px;height:22px;background:#ea4335"></div>
<div class="cell" style="left:27px;top:570px;width:78px;height:22px;line-height:22px;padding-top:3px;font-weight:normal;font-style:normal;-webkit-text-stroke:0.35px #000;text-indent:-0.6px">March 7</div>
<div class="cell" style="left:201px;top:570px;width:133px;height:22px;line-height:22px;padding-top:3px;">Nour Marwan</div>
<div class="cell" style="left:335px;top:570px;width:92px;height:22px;line-height:22px;padding-top:3px;">1147366603</div>
<div class="cell" style="left:428px;top:570px;width:102px;height:22px;line-height:22px;padding-top:3px;">AK</div>
<div class="cell" style="left:633px;top:570px;width:658px;height:22px;line-height:22px;padding-top:3px;">Social media / Marketing</div>
<div class="ch" style="left:113px;top:577.1px;width:81px;background:#e8eaed"><div class="ct" style="left:0px;top:0.9px;width:66px;color:#000;">Yehia</div><div class="arr" style="left:68.9px;top:5.4px;border-top-color:#000"></div></div>
<div class="ch" style="left:538px;top:577.1px;width:88px;background:#0a53a8"><div class="ct" style="left:0px;top:0.9px;width:75px;color:#bfe1f6;">B2</div><div class="arr" style="left:75.9px;top:5.4px;border-top-color:#bfe1f6"></div></div>
<div class="ch" style="left:1299px;top:577.1px;width:60px"></div>
<div class="abs" style="left:27px;top:593px;width:1314px;height:10px;background:#ea4335"></div>
<div class="ch" style="left:113px;top:600px;width:81px;background:#e8eaed"><div class="ct" style="left:0px;top:0.9px;width:66px;color:#000;">Yehia</div><div class="arr" style="left:68.9px;top:5.4px;border-top-color:#000"></div></div>
<div class="ch" style="left:538px;top:600px;width:88px;background:#11734b"><div class="ct" style="left:0px;top:0.9px;width:75px;color:#d4edbc;">C1</div><div class="arr" style="left:75.9px;top:5.4px;border-top-color:#d4edbc"></div></div>
<div class="ch" style="left:1299px;top:600px;width:60px"></div>
<div class="abs" style="left:196px;top:501px;width:0;height:0;border-left:4px solid transparent;border-top:4.8px solid #ea4335"></div>
<div class="vl" style="left:105px;top:124px;height:479px"></div>
<div class="vl" style="left:200px;top:124px;height:479px"></div>
<div class="vl" style="left:334px;top:124px;height:479px"></div>
<div class="vl" style="left:427px;top:124px;height:479px"></div>
<div class="vl" style="left:530px;top:124px;height:479px"></div>
<div class="vl" style="left:632px;top:124px;height:479px"></div>
<div class="vl" style="left:1291px;top:124px;height:479px"></div>
<div class="hl" style="left:27px;top:155px;width:1314px"></div>
<div class="hl" style="left:27px;top:178px;width:1314px"></div>
<div class="hl" style="left:27px;top:201px;width:1314px"></div>
<div class="hl" style="left:27px;top:224px;width:1314px"></div>
<div class="hl" style="left:27px;top:247px;width:1314px"></div>
<div class="hl" style="left:27px;top:270px;width:1314px"></div>
<div class="hl" style="left:27px;top:293px;width:1314px"></div>
<div class="hl" style="left:27px;top:316px;width:1314px"></div>
<div class="hl" style="left:27px;top:339px;width:1314px"></div>
<div class="hl" style="left:27px;top:362px;width:1314px"></div>
<div class="hl" style="left:27px;top:385px;width:1314px"></div>
<div class="hl" style="left:27px;top:408px;width:1314px"></div>
<div class="hl" style="left:27px;top:431px;width:1314px"></div>
<div class="hl" style="left:27px;top:454px;width:1314px"></div>
<div class="hl" style="left:27px;top:477px;width:1314px"></div>
<div class="hl" style="left:27px;top:500px;width:1314px"></div>
<div class="hl" style="left:27px;top:523px;width:1314px"></div>
<div class="hl" style="left:27px;top:546px;width:1314px"></div>
<div class="hl" style="left:27px;top:569px;width:1314px"></div>
<div class="hl" style="left:27px;top:592px;width:1314px"></div>
<div class="abs" style="left:105px;top:124px;width:1px;height:31px;background:#1a73e8"></div>
<div class="abs" style="left:27px;top:153.5px;width:78px;height:1.5px;background:#1a73e8"></div>
<div class="abs" style="left:103.2px;top:152.2px;width:7.6px;height:7.6px;border-radius:50%;background:#0b57d0;border:1.1px solid #fff"></div>
<div class="abs" style="left:0;top:603px;width:1341px;height:1px;background:#dadce0"></div>
<div class="abs" style="left:0;top:604px;width:26px;height:8px;background:#f8f9fa"></div>
<div class="abs" style="left:26px;top:604px;width:1.5px;height:8px;background:#dadce0"></div>
<div class="abs" style="left:27.5px;top:604px;width:1314px;height:8px;background:#fff"></div>
<div class="abs" style="left:30px;top:603.5px;width:848px;height:7.3px;border-radius:4px;background:#dadce0"></div>
<div class="abs" style="left:1318px;top:603.5px;width:11px;height:9px;background:#f8f9fa;border-left:1px solid #e8eaed"></div>
<div class="abs" style="left:1330px;top:603.5px;width:11px;height:9px;background:#f8f9fa;border-left:1px solid #e8eaed"></div>
<div class="abs" style="left:1322px;top:606px;width:0;height:0;border-top:2.5px solid transparent;border-bottom:2.5px solid transparent;border-right:3px solid #80868b"></div>
<div class="abs" style="left:1334px;top:606px;width:0;height:0;border-top:2.5px solid transparent;border-bottom:2.5px solid transparent;border-left:3px solid #80868b"></div>
<div class="abs" style="left:0;top:612px;width:1341px;height:1px;background:#fff"></div>
<div class="abs" style="left:0;top:613px;width:1341px;height:1px;background:#e1e3e1"></div>
<div class="abs" style="left:0;top:614px;width:1341px;height:2px;background:#f9fbfd"></div>
<div class="abs" style="left:93px;top:613.8px;width:87.6px;height:2.2px;background:#e1e9f7"></div>
<svg class="abs" style="left:0;top:0;pointer-events:none" width="1341" height="616" viewBox="0 0 1341 616">
<g opacity="0.42" fill="none" stroke="#c4c4c4" stroke-linecap="round">
  <path d="M609.2 552.35 A10.8 10.8 0 1 0 613.8 569.4" stroke-width="7.3"/>
  <path d="M617 535.3 V564.8 H734" stroke-width="7.5" stroke-linejoin="round"/>
  <circle cx="642.9" cy="556.5" r="10.35" stroke-width="7.1"/>
  <circle cx="734.6" cy="561.9" r="10.85" stroke-width="7.1"/>
  <path d="M671.3 556.7 V564 M686 556.7 V564 M698 554.7 V564 M709.8 552.7 V564" stroke-width="7.3"/>
</g>
<g opacity="0.42" fill="#c4c4c4">
  <circle cx="638" cy="534.6" r="4.3"/>
  <circle cx="648.8" cy="534.6" r="4.3"/>
  <circle cx="667" cy="543.9" r="4.3"/>
  <circle cx="677.2" cy="543.9" r="4.3"/>
  <text x="589" y="597.2" font-family="Liberation Sans" font-weight="bold" font-size="26">mostaql.com</text>
</g>
</svg>

</body></html>
